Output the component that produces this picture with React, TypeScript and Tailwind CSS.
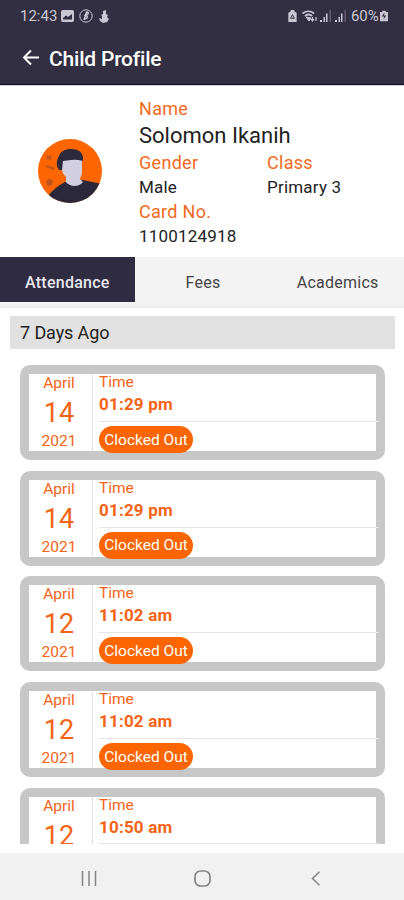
import clsx from "clsx";

interface Entry {
  month: string;
  day: string;
  year: string;
  time: string;
  status: string;
}

const entries: Entry[] = [
  { month: "April", day: "14", year: "2021", time: "01:29 pm", status: "Clocked Out" },
  { month: "April", day: "14", year: "2021", time: "01:29 pm", status: "Clocked Out" },
  { month: "April", day: "12", year: "2021", time: "11:02 am", status: "Clocked Out" },
  { month: "April", day: "12", year: "2021", time: "11:02 am", status: "Clocked Out" },
];

const tabs = ["Attendance", "Fees", "Academics"];

export default function App() {
  return (
    <div className="flex h-[900px] w-[404px] flex-col overflow-hidden bg-white font-['Roboto',sans-serif] text-[#222]">
      <header className="flex h-[85px] shrink-0 flex-col border-b border-[#15122b] bg-[#322f42]">
        <StatusBar />
        <div className="flex h-[52px] items-center pl-[22px] text-white">
          <svg width="18" height="18" viewBox="0 0 18 18" fill="none" stroke="currentColor" strokeWidth="2">
            <path d="M17 8.500H2M9 1.500L2 8.500l7 7" />
          </svg>
          <h1 className="ml-[9px] pt-0.5 text-[21px] leading-6 font-medium tracking-[-0.2px]">Child Profile</h1>
        </div>
      </header>
      <Profile />
      <nav className="flex h-[51px] shrink-0 border-b-2 border-[#ececec] bg-[#f4f4f4] text-[16px]">
        {tabs.map((tab, i) => (
          <div
            key={tab}
            className={clsx(
              "flex h-[45px] w-[135px] items-center justify-center pt-1.5 tracking-[0.25px]",
              i === 0 ? "bg-[#2f2b40] font-medium text-[#e9e8f2]" : "pl-0.5 text-[#444]",
            )}
          >
            {tab}
          </div>
        ))}
      </nav>
      <div className="mx-[10px] mt-2 flex h-[33px] w-[385px] shrink-0 items-center bg-[#e1e1e1] pl-[10px] text-[18px] tracking-[-0.1px]">
        7 Days Ago
      </div>
      <main className="mt-[15.75px] flex h-[479px] shrink-0 flex-col gap-[10.75px] overflow-hidden pl-5">
        {entries.map((entry, i) => (
          <EntryCard key={i} entry={entry} />
        ))}
        <EntryCard entry={{ month: "April", day: "12", year: "2021", time: "10:50 am", status: "Clocked Out" }} partial />
      </main>
      <NavigationBar />
    </div>
  );
}

function StatusBar() {
  return (
    <div className="flex h-[33px] items-center pr-[16px] pl-5 text-[15px] text-[#c9c7d3]">
      <span className="w-[41px]">12:43</span>
      <svg width="13" height="12" viewBox="0 0 13 12">
        <rect width="13" height="12" rx="2" fill="currentColor" />
        <path d="M2 9.500V8l3-2.500 2 1.500 4-3v5.500z" fill="#322f42" />
      </svg>
      <svg className="ml-[5px]" width="14" height="14" viewBox="0 0 14 14" fill="none" stroke="currentColor">
        <circle cx="7" cy="7" r="6.200" />
        <path d="M5 11l2.500-8q2.500 0 1.500 2L6.500 6.500Q9 7 8 9q-1 1-3 .5" strokeWidth="1.500" />
      </svg>
      <svg className="ml-[6px]" width="10" height="13" viewBox="0 0 10 13" fill="currentColor">
        <path d="M4 1l3-1v4l2 1-1 2 2 2-2 3-4 1-3-2-1-3 3 1V6L2 5l2-1z" />
      </svg>
      <svg className="ml-auto" width="9" height="12" viewBox="0 0 9 13">
        <path d="M2.500 0h4v1.500L9 3v10H0V3l2.500-1.500z" fill="currentColor" />
        <path d="M2.500 9l2-4 2 4z" fill="none" stroke="#322f42" />
      </svg>
      <svg className="ml-[5px]" width="16" height="13" viewBox="0 0 16 13" fill="none" stroke="currentColor">
        <path d="M.5 3.500Q6.500-1 12 3.500M3 6q3.500-3 7 0" strokeWidth="1.700" />
        <path d="M4 7l3 4 2-3z" fill="currentColor" />
        <path d="M10.500 7v4M14 11V7M9 9l1.500 2L12 9" strokeWidth="1.200" />
      </svg>
      <SignalIcon className="ml-[2px]" />
      <SignalIcon className="ml-[4px]" />
      <span className="ml-[5px] w-[29px] text-[15px] tracking-[-0.1px]">60%</span>
      <svg width="8" height="12" viewBox="0 0 9 12">
        <path d="M2.500 0h4v1.500H9V12H0V1.500h2.500z" fill="currentColor" />
        <path d="M5 2L2 6.500h2.500L4 10l3-4.500H4.500z" fill="#322f42" />
      </svg>
    </div>
  );
}

function SignalIcon({ className }: { className?: string }) {
  return (
    <svg className={className} width="11" height="12" viewBox="0 0 11 12" fill="currentColor">
      <path d="M0 10h2v2H0zM3.500 7H5v5H3.500zM6 3.500h1.500V12H6z" />
      <path d="M9.500 0H11v12H9.500z" opacity=".3" />
    </svg>
  );
}

function Profile() {
  return (
    <section className="flex h-[172px] shrink-0 border-t border-[#d3d0e0]">
      <div className="flex w-[139px] items-center pb-0.5 pl-[38px]">
        <Avatar />
      </div>
      <div className="flex flex-col pt-[10px]">
        <Label>Name</Label>
        <div className="h-[29px] text-[22px] leading-[30px]">Solomon Ikanih</div>
        <div className="flex">
          <div className="w-[128px]">
            <Label>Gender</Label>
            <Value>Male</Value>
          </div>
          <div>
            <Label>Class</Label>
            <Value>Primary 3</Value>
          </div>
        </div>
        <Label>Card No.</Label>
        <Value>1100124918</Value>
      </div>
    </section>
  );
}

function Label({ children }: { children: string }) {
  return <div className="h-[25px] text-[18px] leading-[25px] tracking-[0.3px] text-[#f26a21]">{children}</div>;
}

function Value({ children }: { children: string }) {
  return <div className="h-[24px] text-[17px] leading-[24px] tracking-[0.2px]">{children}</div>;
}

function Avatar() {
  return (
    <svg width="64" height="64" viewBox="0 0 64 64">
      <clipPath id="avatar">
        <circle cx="32" cy="32" r="32" />
      </clipPath>
      <g clipPath="url(#avatar)">
        <rect width="64" height="64" fill="#fd6500" />
        <g fill="#a84f27" opacity=".75">
          <path d="M8 16l3 1 3-1-1 3 1 2-3-1-3 1 1-3zM9 26l8 3-1 2-8-3zM9 41l3-1 3 2-1 4-4 1-2-3z" />
        </g>
        <path d="M10 57q7-9 17-14l18-2 19 4v20H12z" fill="#2b283b" />
        <path d="M24 19h20v14q0 3-1 4l-1 3 3 3q-3 4-9 4-6-1-8-4v-5q-4-3-4-9z" fill="#d2cfe1" />
        <path d="M21 31q-4-6-1-12 2-8 11-9 15-1 14 12-7-2-12-1l-8 1-1 9z" fill="#2d2a3d" />
      </g>
    </svg>
  );
}

// A partial card is the last one in view: it ends at the bottom edge of the list.
function EntryCard({ entry, partial }: { entry: Entry; partial?: boolean }) {
  return (
    <article
      className={clsx(
        "flex w-[365px] shrink-0 bg-[#c7c7c7] px-[9px] pt-[9px] text-[#f56416]",
        partial ? "h-[56px] rounded-t-[10px]" : "h-[95px] rounded-[10px]",
      )}
    >
      <div className={clsx("flex w-[347px] bg-white", partial ? "h-[47px]" : "h-[77px]")}>
        <div className="flex w-[64px] shrink-0 flex-col items-center border-r border-[#e3e3e3] pr-[3px] text-[15.5px]">
          <span className="h-[19px] leading-[19px]">{entry.month}</span>
          <span className="h-[39px] text-[27px] leading-[41px]">{entry.day}</span>
          {!partial && <span className="h-[19px] leading-[19px]">{entry.year}</span>}
        </div>
        <div className="ml-[6px] flex w-[280px] shrink-0 flex-col items-start">
          <span className="h-[17px] shrink-0 text-[15.5px] leading-[17px]">Time</span>
          <div
            className={clsx(
              "w-full shrink-0 border-b border-[#e6e6e6] text-[17px] leading-[27px] font-bold tracking-[0.2px]",
              partial ? "h-[30px]" : "h-[31px]",
            )}
          >
            {entry.time}
          </div>
          {!partial && (
            <span className="mt-[4px] flex h-[27px] w-[94px] shrink-0 items-center justify-center rounded-full bg-[#fd6500] pt-0.5 text-[15.5px] text-white">
              {entry.status}
            </span>
          )}
        </div>
      </div>
    </article>
  );
}

function NavigationBar() {
  return (
    <footer className="mt-auto flex h-[47px] shrink-0 items-center bg-[#f1f1f1] pt-[3px] text-[#858585]">
      <svg className="ml-[81px]" width="16" height="15" viewBox="0 0 16 15" stroke="currentColor" strokeWidth="1.500">
        <path d="M1.500 0v15M8 0v15M14.500 0v15" />
      </svg>
      <svg className="ml-[97px]" width="17" height="17" viewBox="0 0 17 17" fill="none" stroke="currentColor" strokeWidth="1.700">
        <rect x="1" y="1" width="15" height="15" rx="5.500" />
      </svg>
      <svg className="ml-[100px]" width="9" height="15" viewBox="0 0 9 15" fill="none" stroke="currentColor" strokeWidth="1.600">
        <path d="M8.500 .7L1.500 7.500l7 6.800" />
      </svg>
    </footer>
  );
}
